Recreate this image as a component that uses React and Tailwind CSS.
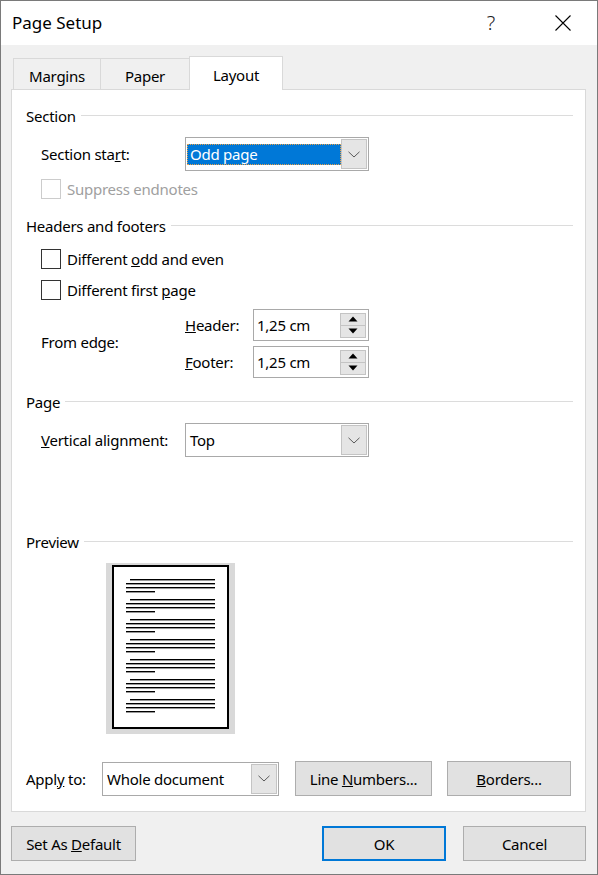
import React from "react";

function Chevron() {
  return (
    <svg width="12" height="7" viewBox="0 0 12 7">
      <path d="M0.5 0.8 L6 6 L11.5 0.8" fill="none" stroke="#5a5a5a" strokeWidth="1" />
    </svg>
  );
}

function ComboButton() {
  return (
    <div className="w-[26px] h-[30px] mr-[1px] bg-[#e5e5e5] border border-[#c4c4c4] flex items-center justify-center">
      <Chevron />
    </div>
  );
}

function Combo({ width, children, selected }) {
  return (
    <div
      className="h-[34px] border border-[#a9a9a9] bg-white flex items-center"
      style={{ width }}
    >
      <div className="flex-1 min-w-0 h-full flex items-center">
        {selected ? (
          <div className="ml-[1px] w-[154px] h-[21px] bg-[#0078d7] border border-dotted border-[#e8a048] text-white flex items-center pl-[2px]">
            {children}
          </div>
        ) : (
          <div className="pl-[4px]">{children}</div>
        )}
      </div>
      <ComboButton />
    </div>
  );
}

function Tri({ up }) {
  return (
    <svg width="10" height="6" viewBox="0 0 10 6">
      {up ? (
        <path d="M0.5 5.5 L5 0.5 L9.5 5.5 Z" fill="#000" />
      ) : (
        <path d="M0.5 0.5 L5 5.5 L9.5 0.5 Z" fill="#000" />
      )}
    </svg>
  );
}

function Spin({ value }) {
  return (
    <div className="w-[116px] h-[32px] border border-[#a9a9a9] bg-white flex items-center">
      <div className="flex-1 pl-[3px]">{value}</div>
      <div className="w-[26px] h-[25px] mr-[2px] flex flex-col">
        <div className="h-[13px] bg-[#e5e5e5] border border-[#c4c4c4] flex items-center justify-center">
          <Tri up />
        </div>
        <div className="h-[13px] -mt-px bg-[#e5e5e5] border border-[#c4c4c4] flex items-center justify-center">
          <Tri />
        </div>
      </div>
    </div>
  );
}

function Checkbox({ disabled, children }) {
  return (
    <div className="flex items-center h-[20px]">
      <div
        className={
          disabled
            ? "w-[20px] h-[20px] border border-[#cccccc] bg-white"
            : "w-[20px] h-[20px] border border-[#333333] bg-white"
        }
      />
      <div className={disabled ? "ml-[6px] text-[#a0a0a0]" : "ml-[6px]"}>{children}</div>
    </div>
  );
}

function Header({ children, className }) {
  return (
    <div className={"flex items-center h-[20px] pl-[14px] pr-[12px] " + (className || "")}>
      <span>{children}</span>
      <div className="flex-1 h-px bg-[#dcdcdc] ml-[5px] -mt-[2px]" />
    </div>
  );
}

function Btn({ width, children, primary }) {
  return (
    <div
      className={
        primary
          ? "h-[35px] bg-[#e1e1e1] border-2 border-[#0078d7] flex items-center justify-center"
          : "h-[35px] bg-[#e1e1e1] border border-[#adadad] flex items-center justify-center"
      }
      style={{ width }}
    >
      {children}
    </div>
  );
}

function Preview() {
  const groups = [0, 1, 2, 3, 4, 5, 6];
  return (
    <div className="ml-[94px] mt-[11px] w-[129px] h-[171px] bg-[#d9d9d9] pl-[6px] pt-[2px]">
      <div className="w-[117px] h-[164px] border-2 border-black bg-white">
        <svg width="113" height="160" viewBox="0 0 113 160" className="block">
          {groups.map((g) => {
            const y = 12 + g * 20;
            return (
              <g key={g} fill="#000">
                <rect x="16" y={y} width="85" height="1.4" />
                <rect x="12" y={y + 4} width="89" height="1.4" />
                <rect x="12" y={y + 8} width="89" height="1.4" />
                <rect x="12" y={y + 12} width="29" height="1.4" />
              </g>
            );
          })}
        </svg>
      </div>
    </div>
  );
}

export default function App() {
  return (
    <div className="w-[598px] h-[875px] border border-[#7a7a7a] bg-[#f0f0f0] flex flex-col font-['Noto_Sans',sans-serif] text-[15px] leading-[20px] tracking-[-0.25px] text-black overflow-hidden">
      {/* Title bar */}
      <div className="h-[44px] bg-white flex items-center pl-[11px] relative">
        <span className="text-[17px] -mt-[1px] tracking-normal">Page Setup</span>
        <div className="flex-1" />
        <span className="text-[20px] font-light mr-[60px] -mt-[1px] text-[#222]">?</span>
        <svg width="16" height="16" viewBox="0 0 16 16" className="mr-[26px] -mt-[1px]">
          <path d="M0.5 0.5 L15.5 15.5 M15.5 0.5 L0.5 15.5" stroke="#000" strokeWidth="1.1" />
        </svg>
      </div>

      {/* Tabs */}
      <div className="h-[44px] flex items-end pl-[12px] relative z-10">
        <div className="w-[87px] h-[31px] border-l border-t border-[#d9d9d9] flex items-center justify-center pt-[3px]">
          Margins
        </div>
        <div className="w-[89px] h-[31px] border-l border-t border-[#d9d9d9] flex items-center justify-center pt-[3px]">
          Paper
        </div>
        <div className="w-[94px] h-[34px] -mb-px border-l border-t border-r border-[#d9d9d9] bg-white flex items-center justify-center pt-[2px]">
          Layout
        </div>
      </div>

      {/* Panel */}
      <div className="ml-[10px] w-[575px] h-[723px] border border-[#d9d9d9] bg-white flex flex-col">
        <Header className="mt-[16px]">Section</Header>

        <div className="flex items-center mt-[11px] pl-[29px]">
          <div className="w-[144px]">
            Section sta<u>r</u>t:
          </div>
          <Combo width={184} selected>
            Odd page
          </Combo>
        </div>

        <div className="mt-[8px] pl-[29px]">
          <Checkbox disabled>Suppress endnotes</Checkbox>
        </div>

        <Header className="mt-[17px]">Headers and footers</Header>

        <div className="mt-[13px] pl-[29px]">
          <Checkbox>
            <span>Different{" "}<u>o</u>dd and even</span>
          </Checkbox>
        </div>
        <div className="mt-[11px] pl-[29px]">
          <Checkbox>
            <span>Different first{" "}<u>p</u>age</span>
          </Checkbox>
        </div>

        <div className="mt-[9px] pl-[29px] flex items-center">
          <div className="w-[144px] mb-[3px]">From edge:</div>
          <div className="flex flex-col gap-[5px]">
            <div className="flex items-center">
              <div className="w-[68px]">
                <u>H</u>eader:
              </div>
              <Spin value="1,25 cm" />
            </div>
            <div className="flex items-center">
              <div className="w-[68px]">
                <u>F</u>ooter:
              </div>
              <Spin value="1,25 cm" />
            </div>
          </div>
        </div>

        <Header className="mt-[14px]">Page</Header>

        <div className="flex items-center mt-[11px] pl-[29px]">
          <div className="w-[144px]">
            <u>V</u>ertical alignment:
          </div>
          <Combo width={184}>Top</Combo>
        </div>

        <Header className="mt-[75px]">Preview</Header>

        <Preview />

        <div className="flex items-center mt-[27px] pl-[14px]">
          <div className="w-[76px]">
            Appl<u>y</u> to:
          </div>
          <Combo width={177}>Whole document</Combo>
          <div className="ml-[16px]">
            <Btn width={137}>
              <span>Line{" "}<u>N</u>umbers...</span>
            </Btn>
          </div>
          <div className="ml-[15px]">
            <Btn width={124}>
              <span><u>B</u>orders...</span>
            </Btn>
          </div>
        </div>
      </div>

      {/* Bottom buttons */}
      <div className="flex items-center mt-[14px] pl-[10px] pr-[11px]">
        <Btn width={125}>
          <span>Set As{" "}<u>D</u>efault</span>
        </Btn>
        <div className="flex-1" />
        <Btn width={124} primary>
          OK
        </Btn>
        <div className="ml-[17px]">
          <Btn width={123}>Cancel</Btn>
        </div>
      </div>
    </div>
  );
}
